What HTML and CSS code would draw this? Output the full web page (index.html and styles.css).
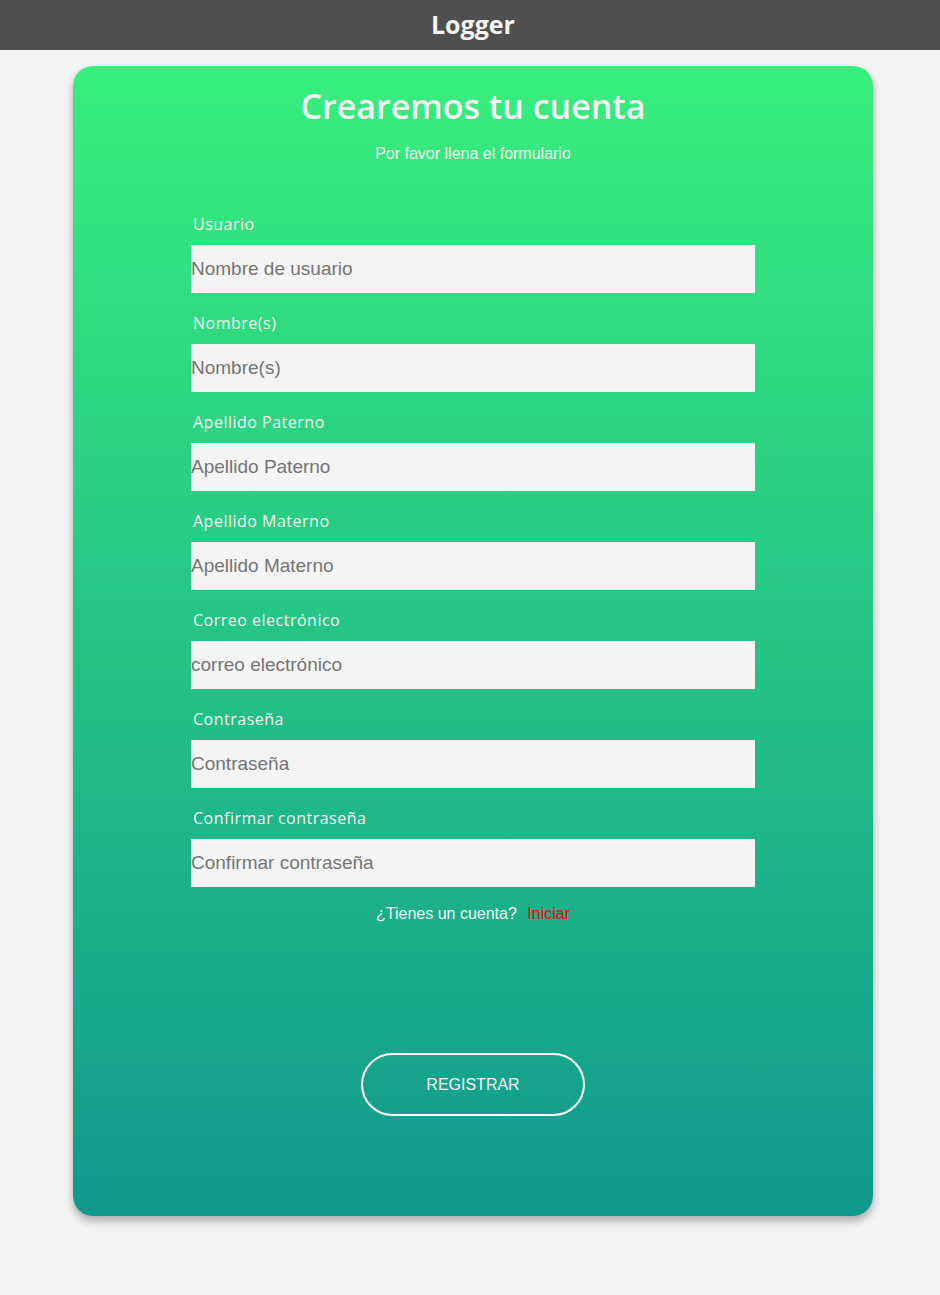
FILE: index.html
```html
<!DOCTYPE html>
<html lang="es">
<head>
<meta charset="utf-8">
<title>Logger</title>
<link rel="stylesheet" href="styles.css">
</head>
<body>
<header class="topbar"><span class="brand">Logger</span></header>
<main class="card">
  <h1 class="title">Crearemos tu cuenta</h1>
  <p class="subtitle">Por favor llena el formulario</p>
  <form class="form">
    <label class="label">Usuario</label>
    <input class="input" type="text" placeholder="Nombre de usuario">
    <label class="label">Nombre(s)</label>
    <input class="input" type="text" placeholder="Nombre(s)">
    <label class="label">Apellido Paterno</label>
    <input class="input" type="text" placeholder="Apellido Paterno">
    <label class="label">Apellido Materno</label>
    <input class="input" type="text" placeholder="Apellido Materno">
    <label class="label">Correo electrónico</label>
    <input class="input" type="email" placeholder="correo electrónico">
    <label class="label">Contraseña</label>
    <input class="input" type="password" placeholder="Contraseña">
    <label class="label">Confirmar contraseña</label>
    <input class="input" type="password" placeholder="Confirmar contraseña">
    <p class="account">¿Tienes un cuenta? <a class="link" href="#">Iniciar</a></p>
    <button class="btn" type="button">REGISTRAR</button>
  </form>
</main>
</body>
</html>
```
FILE: styles.css
```css
* { box-sizing: border-box; }
body {
  margin: 0;
  background: #f4f4f4;
  font-family: "Liberation Sans", Arial, sans-serif;
  height: 1295px;
}
.topbar {
  height: 50px;
  background: #4f4f4f;
  display: flex;
  align-items: center;
  justify-content: center;
  padding-left: 6px;
  padding-bottom: 3px;
}
.brand {
  font-family: "Open Sans", sans-serif;
  font-weight: 700;
  font-size: 25px;
  color: #f4f4f4;
  letter-spacing: 0;
}
.card {
  width: 800px;
  height: 1150px;
  margin: 16px 0 0 73px;
  border-radius: 20px;
  background: linear-gradient(to bottom, #38ef7d, #11998e);
  box-shadow: 0 5px 8px rgba(0,0,0,0.3);
  padding-top: 20px;
  display: flex;
  flex-direction: column;
  align-items: center;
}
.title {
  margin: 0;
  font-family: "Open Sans", sans-serif;
  font-weight: 600;
  font-size: 34px;
  line-height: 40px;
  color: #f4f4f4;
  letter-spacing: 0;
}
.subtitle {
  margin: 18px 0 0;
  font-size: 16px;
  line-height: 20px;
  color: #f4f4f4;
}
.form {
  width: 564px;
  display: flex;
  flex-direction: column;
  margin-top: 50px;
}
.label {
  font-family: "Open Sans", sans-serif;
  font-weight: 500;
  font-size: 16px;
  line-height: 20px;
  color: #f4f4f4;
  padding-left: 2px;
  letter-spacing: 0.5px;
  margin-top: 20px;
  margin-bottom: 11px;
}
.label:first-child { margin-top: 0; }
.input {
  height: 48px;
  border: none;
  background: #f4f4f4;
  padding: 0;
  font-family: "Liberation Sans", Arial, sans-serif;
  font-size: 19px;
  color: #333;
  outline: none;
}
.input::placeholder { color: #757575; }
.account {
  margin: 18px 0 0;
  text-align: center;
  font-size: 16px;
  line-height: 18px;
  color: #f4f4f4;
}
.link {
  color: #ff0000;
  text-decoration: none;
  margin-left: 6px;
}
.btn {
  align-self: center;
  margin-top: 130px;
  width: 224px;
  height: 63px;
  border: 2px solid #fff;
  border-radius: 32px;
  background: transparent;
  color: #f4f4f4;
  font-family: "Liberation Sans", Arial, sans-serif;
  font-size: 16px;
}
```
